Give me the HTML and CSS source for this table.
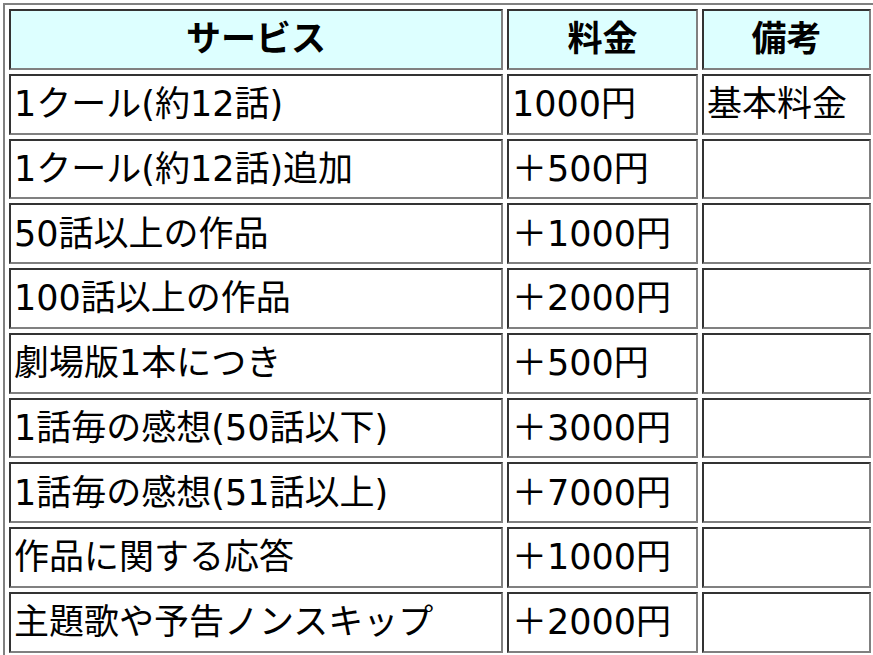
FILE: index.html
```html
<!DOCTYPE html>
<html lang="ja">
<head>
<meta charset="utf-8">
<title>料金表</title>
<link rel="stylesheet" href="styles.css">
</head>
<body>
<table class="price">
  <thead>
    <tr>
      <th class="col-service">サービス</th>
      <th class="col-fee">料金</th>
      <th class="col-note">備考</th>
    </tr>
  </thead>
  <tbody>
    <tr><td>1クール(約12話)</td><td>1000円</td><td>基本料金</td></tr>
    <tr><td>1クール(約12話)追加</td><td>＋500円</td><td></td></tr>
    <tr><td>50話以上の作品</td><td>＋1000円</td><td></td></tr>
    <tr><td>100話以上の作品</td><td>＋2000円</td><td></td></tr>
    <tr><td>劇場版1本につき</td><td>＋500円</td><td></td></tr>
    <tr><td>1話毎の感想(50話以下)</td><td>＋3000円</td><td></td></tr>
    <tr><td>1話毎の感想(51話以上)</td><td>＋7000円</td><td></td></tr>
    <tr><td>作品に関する応答</td><td>＋1000円</td><td></td></tr>
    <tr><td>主題歌や予告ノンスキップ</td><td>＋2000円</td><td></td></tr>
  </tbody>
</table>
</body>
</html>
```
FILE: styles.css
```css
html, body {
  margin: 0;
  background: #ffffff;
  overflow: hidden;
}

body {
  padding: 3px;
}

.price {
  border: 2px solid #808080;
  border-collapse: separate;
  border-spacing: 4px;
  table-layout: fixed;
  width: 874px;
  font-family: "DejaVu Sans", "Noto Sans CJK JP", sans-serif;
  font-size: 35px;
  color: #000000;
}

.price th,
.price td {
  box-sizing: border-box;
  height: 60.75px;
  border-style: solid;
  border-width: 2px;
  border-color: #333333 #808080 #808080 #333333;
  padding: 0 3px;
  line-height: 1.2;
  vertical-align: middle;
  white-space: nowrap;
  overflow: hidden;
}

.price th {
  background: #ddffff;
  font-weight: bold;
  text-align: center;
}

.price td {
  text-align: left;
  font-weight: normal;
}

.col-service { width: 494px; }
.col-fee { width: 191px; }
.col-note { width: 169px; }
```
